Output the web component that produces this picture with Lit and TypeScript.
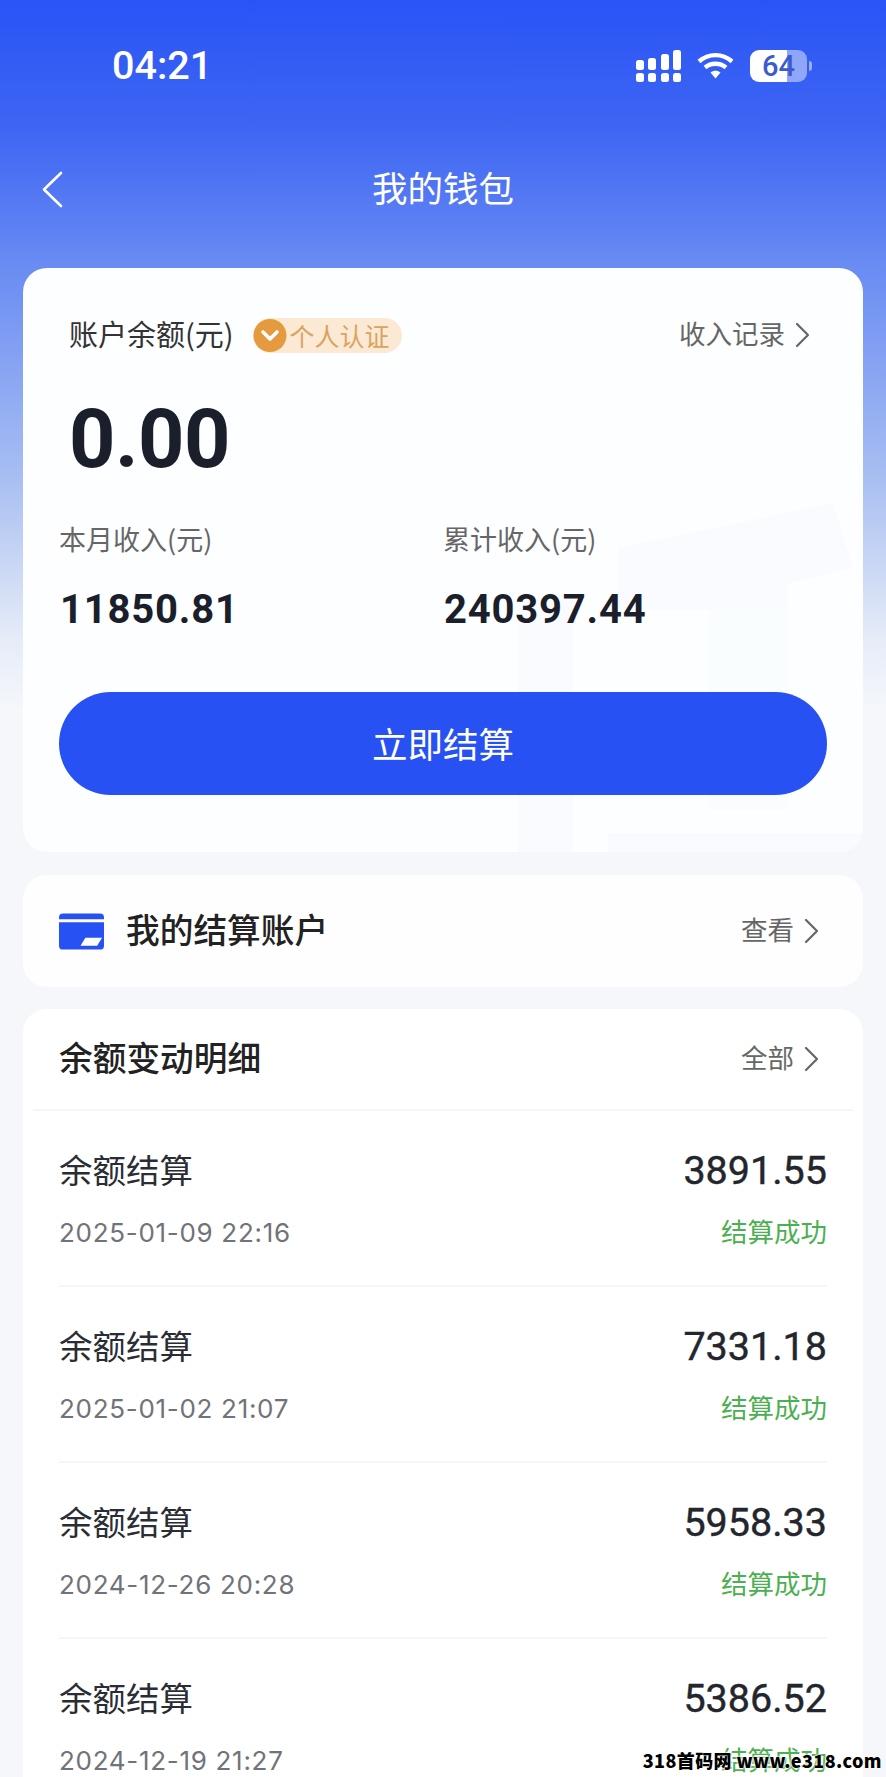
import { LitElement, html, css, svg } from 'lit';
import { customElement } from 'lit/decorators.js';

const records = [
	{ date: '2025-01-09 22:16', amount: '3891.55' },
	{ date: '2025-01-02 21:07', amount: '7331.18' },
	{ date: '2024-12-26 20:28', amount: '5958.33' },
	{ date: '2024-12-19 21:27', amount: '5386.52' }
];

const chevron = svg`<svg class="chev" viewBox="0 0 15 26" width="15" height="26" fill="none" stroke="currentColor" stroke-width="2.2" stroke-linecap="round" stroke-linejoin="round"><path d="M2 2l11 11L2 24"/></svg>`;

@customElement('app-root')
export class AppRoot extends LitElement {
	static styles = css`
		:host {
			display: block;
			position: relative;
			width: 886px;
			height: 1777px;
			overflow: hidden;
			font-family: 'Noto Sans CJK SC', 'Noto Sans', sans-serif;
			color: #1e222b;
			background: linear-gradient(180deg, #2a54f6 0, #3e66f3 130px, #6a8cf3 268px, #a9bff2 480px, #e6ecf8 640px, #f5f7fa 710px);
		}

		.status {
			display: flex;
			align-items: center;
			justify-content: space-between;
			height: 44px;
			margin-top: 44px;
			padding: 0 74px 0 112px;
			color: #fff;
		}
		.time {
			font-family: Roboto, sans-serif;
			font-size: 39.500px;
			font-weight: 500;
			line-height: 44px;
		}
		.status-icons {
			display: flex;
			align-items: center;
			gap: 16px;
		}
		.signal, .wifi { display: block; }
		.battery {
			display: flex;
			align-items: center;
			gap: 2px;
		}
		.battery-body {
			width: 57px;
			height: 32px;
			border-radius: 9px;
			display: flex;
			align-items: center;
			justify-content: center;
			background: linear-gradient(90deg, #fff 0 65%, rgba(255, 255, 255, 0.45) 65%);
			color: #3b5bcf;
			font-family: Roboto, sans-serif;
			font-size: 29px;
			font-weight: 500;
		}
		.battery-nub {
			width: 3px;
			height: 10px;
			border-radius: 0 3px 3px 0;
			background: rgba(255, 255, 255, 0.5);
		}

		.nav {
			display: grid;
			grid-template-columns: 1fr auto 1fr;
			align-items: center;
			height: 80px;
			margin-top: 61px;
			padding: 0 41px;
			color: #fff;
		}
		.nav-title {
			font-size: 35.500px;
			line-height: 40px;
			padding-bottom: 4px;
		}
		.back { display: block; }

		.card {
			margin: 0 23px;
			background: #fff;
			border-radius: 24px;
		}

		.wallet {
			position: relative;
			overflow: hidden;
			margin-top: 39px;
			padding: 47px 36px 57px;
			background: #fdfeff;
		}
		.mark {
			position: absolute;
			left: 480px;
			top: 230px;
		}
		.wallet > *:not(.mark) {
			position: relative;
		}
		.balance-row {
			display: flex;
			align-items: center;
			height: 40px;
			padding-left: 10px;
		}
		.balance-label {
			font-size: 29px;
			line-height: 36px;
			padding-bottom: 4px;
			color: #333;
		}
		.badge {
			display: flex;
			align-items: center;
			height: 35px;
			margin-left: 19px;
			padding-right: 12px;
			border-radius: 18px;
			background: #fbe9d4;
			color: #d9a45f;
			font-size: 25px;
			gap: 2px;
		}
		.badge svg { display: block; }
		.link {
			display: flex;
			align-items: center;
			gap: 10px;
			margin-left: auto;
			font-size: 26.500px;
			line-height: 36px;
			color: #666;
		}
		.link .txt { padding-bottom: 4px; }
		.balance-row .link { margin-right: 17px; }
		.amount {
			margin-top: 45px;
			padding-left: 10px;
			font-family: Roboto, sans-serif;
			font-size: 81px;
			font-weight: 700;
			line-height: 80px;
			letter-spacing: -0.500px;
			color: #1a1f2b;
		}
		.stats {
			display: grid;
			grid-template-columns: 384px 1fr;
			margin-top: 42px;
		}
		.stat-label {
			font-size: 27px;
			line-height: 34px;
			padding-bottom: 2px;
			color: #666;
		}
		.stat-value {
			margin-top: 30px;
			padding-left: 1px;
			font-family: Roboto, sans-serif;
			font-size: 40px;
			font-weight: 700;
			line-height: 44px;
			letter-spacing: 0.800px;
			color: #1a1f2b;
		}
		.settle {
			display: flex;
			align-items: center;
			justify-content: center;
			height: 103px;
			margin-top: 60px;
			border-radius: 52px;
			background: #2851f3;
			color: #fff;
			font-size: 35.500px;
		}
		.settle span { padding-bottom: 3px; }

		.account {
			display: flex;
			align-items: center;
			height: 112px;
			margin-top: 23px;
			padding: 0 44px 0 36px;
			background: #fefeff;
		}
		.account svg.card-icon { display: block; }
		.section-title {
			font-size: 33.700px;
			font-weight: 500;
			line-height: 40px;
			padding-bottom: 4px;
			color: #222;
		}
		.account .section-title { margin-left: 22px; }

		.details {
			margin-top: 22px;
			padding-bottom: 40px;
		}
		.details-head {
			display: flex;
			align-items: center;
			justify-content: space-between;
			height: 100px;
			margin: 0 10px;
			padding: 0 34px 0 26px;
			border-bottom: 2px solid #f4f5f7;
		}
		.record {
			display: grid;
			grid-template-columns: 1fr auto;
			row-gap: 18px;
			align-content: start;
			align-items: center;
			margin: 0 36px;
			padding: 38px 0 30px;
			border-bottom: 2px solid #f4f5f7;
		}
		.record:last-child { border-bottom: none; }
		.record-title {
			font-size: 33.500px;
			line-height: 40px;
			padding-bottom: 4px;
			color: #2a2d33;
		}
		.record-amount {
			font-family: Roboto, sans-serif;
			font-size: 39.500px;
			font-weight: 400;
			line-height: 44px;
			letter-spacing: 0;
			-webkit-text-stroke: 0.4px #23262d;
			color: #23262d;
		}
		.record-date {
			font-family: Inter, sans-serif;
			font-size: 26px;
			line-height: 44px;
			letter-spacing: 0.700px;
			color: #70737a;
		}
		.record-status {
			font-size: 26.500px;
			line-height: 40px;
			padding-bottom: 4px;
			color: #4caf50;
			text-align: right;
		}

		.watermark {
			position: absolute;
			right: 4px;
			bottom: 6px;
			font-family: 'Noto Sans CJK SC', sans-serif;
			font-size: 18px;
			font-weight: 900;
			line-height: 22px;
			letter-spacing: 0.400px;
			color: #000;
			text-shadow: 0 0 2px #fff, 0 0 2px #fff, 0 0 3px #fff;
		}
	`;

	render() {
		return html`
			<div class="status">
				<span class="time">04:21</span>
				<div class="status-icons">
					<svg class="signal" width="45" height="32" viewBox="0 0 45 32" fill="#fff">
						<rect x="0" y="23" width="8" height="9" rx="2.5"/><rect x="12" y="23" width="8" height="9" rx="2.5"/><rect x="25" y="23" width="8" height="9" rx="2.5"/><rect x="37" y="23" width="8" height="9" rx="2.5"/>
						<rect x="0" y="10" width="8" height="10" rx="2.5"/><rect x="12" y="8" width="8" height="12" rx="2.5"/><rect x="25" y="4" width="8" height="16" rx="2.5"/><rect x="37" y="0" width="8" height="20" rx="2.5"/>
					</svg>
					<svg class="wifi" width="37" height="28" viewBox="0 0 37 28" fill="none" stroke="#fff" stroke-width="4.4">
						<path d="M2 9.5C11.500 1 25.500 1 35 9.500"/>
						<path d="M8 15.500C14 10.500 23 10.500 29 15.500"/>
						<path d="M13.500 20.500L18.500 26.500L23.500 20.500C20.500 18 16.500 18 13.500 20.500Z" fill="#fff" stroke="none"/>
					</svg>
					<div class="battery">
						<div class="battery-body">64</div>
						<div class="battery-nub"></div>
					</div>
				</div>
			</div>

			<div class="nav">
				<svg class="back" width="22" height="37" viewBox="0 0 22 37" fill="none" stroke="#fff" stroke-width="2.6" stroke-linecap="round" stroke-linejoin="round"><path d="M20 2L3 18.500L20 35"/></svg>
				<span class="nav-title">我的钱包</span>
				<span></span>
			</div>

			<div class="card wallet">
				<!-- faint background emblem -->
				<svg class="mark" width="360" height="360" viewBox="0 0 360 360" fill="#f9fbfe">
					<rect x="15" y="100" width="55" height="260"/>
					<path d="M115 50L330 5L350 70L285 85V112H115Z"/>
					<rect x="105" y="335" width="255" height="25"/>
					<rect x="205" y="112" width="80" height="200" opacity="0.6"/>
				</svg>
				<div class="balance-row">
					<span class="balance-label">账户余额(元)</span>
					<span class="badge">
						<svg width="35" height="35" viewBox="0 0 35 35"><circle cx="17" cy="17.500" r="16.500" fill="#e49a3d"/><path d="M10 14l7 7 7-7" fill="none" stroke="#fff" stroke-width="3.600" stroke-linecap="round" stroke-linejoin="round"/></svg>
						个人认证
					</span>
					<span class="link"><span class="txt">收入记录</span> ${chevron}</span>
				</div>
				<div class="amount">0.00</div>
				<div class="stats">
					<div>
						<div class="stat-label">本月收入(元)</div>
						<div class="stat-value">11850.81</div>
					</div>
					<div>
						<div class="stat-label">累计收入(元)</div>
						<div class="stat-value">240397.44</div>
					</div>
				</div>
				<div class="settle"><span>立即结算</span></div>
			</div>

			<div class="card account">
				<svg class="card-icon" width="45" height="37" viewBox="0 0 46 37">
					<path d="M4 0H42A4 4 0 0 1 46 4V6H0V4A4 4 0 0 1 4 0Z" fill="#2851f3"/>
					<path d="M0 9H46V33A4 4 0 0 1 42 37H4A4 4 0 0 1 0 33Z" fill="#2851f3"/>
					<path d="M27 25H44L39 33H22Z" fill="#fff"/>
				</svg>
				<span class="section-title">我的结算账户</span>
				<span class="link"><span class="txt">查看</span> ${chevron}</span>
			</div>

			<div class="card details">
				<div class="details-head">
					<span class="section-title">余额变动明细</span>
					<span class="link"><span class="txt">全部</span> ${chevron}</span>
				</div>
				${records.map(
					(r) => html`<div class="record">
						<span class="record-title">余额结算</span>
						<span class="record-amount">${r.amount}</span>
						<span class="record-date">${r.date}</span>
						<span class="record-status">结算成功</span>
					</div>`
				)}
			</div>

			<div class="watermark">318首码网 www.e318.com</div>
		`;
	}
}
